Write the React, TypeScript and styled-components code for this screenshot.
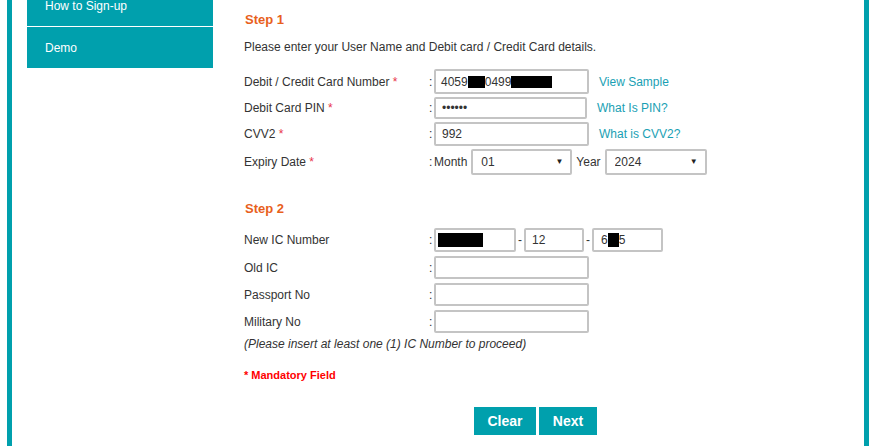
import React from "react";
import styled, { createGlobalStyle } from "styled-components";

const TEAL = "#00a0ad";

const GlobalStyle = createGlobalStyle`
  html, body {
    margin: 0;
    padding: 0;
    background: #ffffff;
  }
  body {
    font-family: "Liberation Sans", Arial, sans-serif;
    font-size: 12px;
    color: #333333;
  }
`;

const Frame = styled.div`
  display: flex;
  width: 862px;
  height: 446px;
  margin-left: 7px;
  padding-left: 15px;
  border-left: 5px solid ${TEAL};
  border-right: 5px solid ${TEAL};
  box-sizing: border-box;
  overflow: hidden;
`;

const Sidebar = styled.ul`
  width: 186px;
  margin: -14px 0 0;
  padding: 0;
  list-style: none;
  flex-shrink: 0;
`;

const SideItem = styled.li<{ $last?: boolean }>`
  display: flex;
  align-items: center;
  height: ${(p) => (p.$last ? "41px" : "40px")};
  padding-left: 18px;
  background: ${TEAL};
  color: #ffffff;
  font-size: 12px;
  border-bottom: ${(p) => (p.$last ? "none" : "1px solid #ffffff")};
`;

const Main = styled.div`
  width: 583px;
  margin-left: 31px;
  flex-shrink: 0;
`;

const StepTitle = styled.h2<{ $top: number }>`
  margin: ${(p) => p.$top}px 0 0 1px;
  font-size: 13px;
  line-height: 16px;
  font-weight: bold;
  color: #e8601c;
`;

const Intro = styled.p`
  margin: 11px 0 0;
  line-height: 16px;
`;

const Rows = styled.div<{ $top: number; $gap: number }>`
  display: flex;
  flex-direction: column;
  gap: ${(p) => p.$gap}px;
  margin-top: ${(p) => p.$top}px;
`;

const Row = styled.div`
  display: flex;
  align-items: center;
`;

const Label = styled.span`
  width: 185px;
  flex-shrink: 0;
`;

const Req = styled.span`
  color: #e8334a;
`;

const Colon = styled.span`
  width: 5px;
  flex-shrink: 0;
`;

const Inline = styled.span<{ $left?: number }>`
  margin: 0 4px 0 ${(p) => p.$left ?? 0}px;
`;

const boxStyle = `
  box-sizing: border-box;
  border: 2px solid #c4c4c4;
  border-radius: 2px;
  background: #ffffff;
  font-family: "Liberation Sans", Arial, sans-serif;
  font-size: 12px;
  color: #333333;
  padding: 0 6px;
`;

const TextBox = styled.input<{ $w: number; $h: number }>`
  ${boxStyle}
  width: ${(p) => p.$w}px;
  height: ${(p) => p.$h}px;
  outline: none;
`;

const FakeBox = styled.div<{ $w: number; $h: number }>`
  ${boxStyle}
  display: flex;
  align-items: center;
  width: ${(p) => p.$w}px;
  height: ${(p) => p.$h}px;
  padding-left: 2px;
`;

const BoxText = styled.span<{ $pad?: number }>`
  padding-left: ${(p) => p.$pad ?? 0}px;
`;

const Redact = styled.span<{ $w: number; $h: number }>`
  display: inline-block;
  width: ${(p) => p.$w}px;
  height: ${(p) => p.$h}px;
  background: #000000;
`;

const Link = styled.a`
  margin-left: 10px;
  color: #1a9fb4;
  text-decoration: none;
  cursor: pointer;
`;

const Dash = styled.span`
  width: 8px;
  text-align: center;
  flex-shrink: 0;
`;

const SelectWrap = styled.div`
  position: relative;
  display: inline-flex;
`;

const Select = styled.select<{ $w: number }>`
  ${boxStyle}
  appearance: none;
  width: ${(p) => p.$w}px;
  height: 26px;
  padding-left: 8px;
  outline: none;
`;

const Arrow = styled.span`
  position: absolute;
  right: 9px;
  top: 8px;
  font-size: 8px;
  color: #222222;
  pointer-events: none;
`;

const Note = styled.p`
  margin: 3px 0 0;
  line-height: 16px;
  font-style: italic;
`;

const Mandatory = styled.p`
  margin: 16px 0 0;
  font-size: 11px;
  line-height: 14px;
  font-weight: bold;
  color: #ff0000;
`;

const Actions = styled.div`
  display: flex;
  justify-content: center;
  gap: 3px;
  margin-top: 25px;
`;

const Button = styled.button<{ $w: number }>`
  width: ${(p) => p.$w}px;
  height: 28px;
  border: none;
  background: ${TEAL};
  color: #ffffff;
  font-family: "Liberation Sans", Arial, sans-serif;
  font-size: 14px;
  font-weight: bold;
  cursor: pointer;
`;

function Field({ label, required, children }: { label: string; required?: boolean; children: React.ReactNode }) {
  return (
    <Row>
      <Label>
        {label}
        {required && <Req> *</Req>}
      </Label>
      <Colon>:</Colon>
      {children}
    </Row>
  );
}

export default function App() {
  return (
    <>
      <GlobalStyle />
      <Frame>
        <Sidebar>
          <SideItem>How to Sign-up</SideItem>
          <SideItem $last>Demo</SideItem>
        </Sidebar>
        <Main>
          <StepTitle $top={12}>Step 1</StepTitle>
          <Intro>Please enter your User Name and Debit card / Credit Card details.</Intro>
          <Rows $top={14} $gap={3}>
            <Field label="Debit / Credit Card Number" required>
              <FakeBox $w={155} $h={25}>
                <BoxText $pad={3}>4059</BoxText>
                <Redact $w={17} $h={12} />
                <BoxText>0499</BoxText>
                <Redact $w={41} $h={12} />
              </FakeBox>
              <Link>View Sample</Link>
            </Field>
            <Field label="Debit Card PIN" required>
              <TextBox $w={153} $h={22} readOnly defaultValue="••••••" />
              <Link>What Is PIN?</Link>
            </Field>
            <Field label="CVV2" required>
              <TextBox $w={155} $h={24} readOnly defaultValue="992" />
              <Link>What is CVV2?</Link>
            </Field>
            <Field label="Expiry Date" required>
              <Inline>Month</Inline>
              <SelectWrap>
                <Select $w={101} defaultValue="01">
                  <option value="01">01</option>
                </Select>
                <Arrow>▼</Arrow>
              </SelectWrap>
              <Inline $left={4}>Year</Inline>
              <SelectWrap>
                <Select $w={102} defaultValue="2024">
                  <option value="2024">2024</option>
                </Select>
                <Arrow>▼</Arrow>
              </SelectWrap>
            </Field>
          </Rows>

          <StepTitle $top={26}>Step 2</StepTitle>
          <Rows $top={11} $gap={4}>
            <Field label="New IC Number">
              <FakeBox $w={82} $h={24}>
                <Redact $w={45} $h={14} />
              </FakeBox>
              <Dash>-</Dash>
              <TextBox $w={60} $h={24} readOnly defaultValue="12" />
              <Dash>-</Dash>
              <FakeBox $w={71} $h={24}>
                <BoxText $pad={5}>6</BoxText>
                <Redact $w={11} $h={14} />
                <BoxText>5</BoxText>
              </FakeBox>
            </Field>
            <Field label="Old IC">
              <TextBox $w={155} $h={23} readOnly defaultValue="" />
            </Field>
            <Field label="Passport No">
              <TextBox $w={155} $h={23} readOnly defaultValue="" />
            </Field>
            <Field label="Military No">
              <TextBox $w={155} $h={23} readOnly defaultValue="" />
            </Field>
          </Rows>
          <Note>(Please insert at least one (1) IC Number to proceed)</Note>
          <Mandatory>* Mandatory Field</Mandatory>
          <Actions>
            <Button $w={62}>Clear</Button>
            <Button $w={58}>Next</Button>
          </Actions>
        </Main>
      </Frame>
    </>
  );
}
